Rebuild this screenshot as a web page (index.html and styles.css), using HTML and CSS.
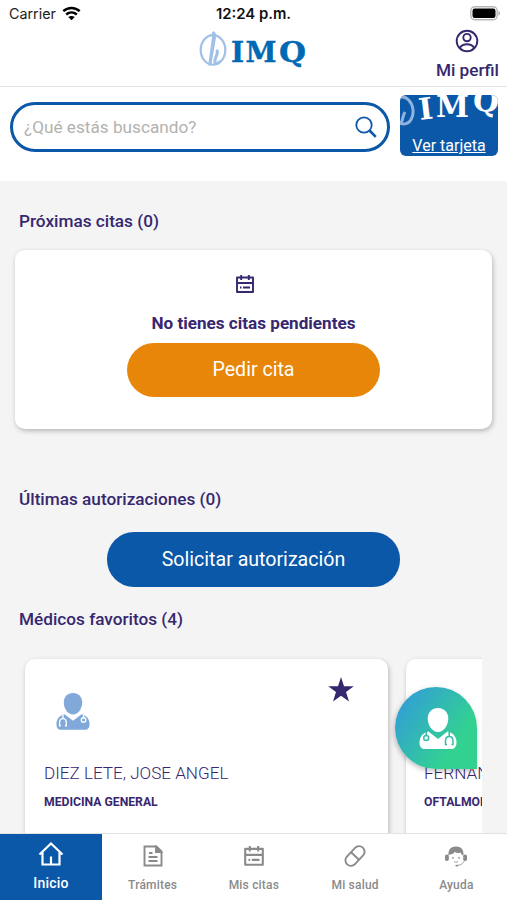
FILE: index.html
```html
<!DOCTYPE html>
<html lang="es">
<head>
    <meta charset="UTF-8">
    <meta name="viewport" content="width=device-width, initial-scale=1.0">
    <title>IMQ</title>
    <link rel="stylesheet" href="styles.css">
</head>
<body>
    <!-- Iconos compartidos -->
    <svg class="sprite" width="0" height="0">
        <symbol id="calendar" viewBox="0 0 20 20">
            <path d="M2 3.500h16v14.500H2zM2 9h16M6.200 1v5M13.800 1v5M5 13.500h1.500M8 13.500h7" fill="none" stroke="currentColor" stroke-width="1.900" stroke-linejoin="round"/>
        </symbol>
        <symbol id="drop" viewBox="0 0 30 40">
            <ellipse cx="15" cy="21.500" rx="13.300" ry="16" fill="none" stroke="currentColor" stroke-width="2.400"/>
            <path d="M15.500 1c2 1.200 3.300 3.500 3 6L13.500 36c-.6 3.500-4 3.500-3.500.5L14 7c-1-2-.5-4.500 1.500-6z" fill="currentColor"/>
            <path d="M19.500 22.500c1.500 3-3 8-2.500 12.500.5 2 3.500 1.500 5-.5" fill="none" stroke="currentColor" stroke-width="3.200" stroke-linecap="round"/>
        </symbol>
        <symbol id="doctor" viewBox="0 0 38 42">
            <path d="M19 1c6 0 10.300 4.200 10.300 10.500C29.300 18.500 24.500 25 19 25S8.700 18.500 8.700 11.500C8.700 5.200 13 1 19 1z" fill="currentColor"/>
            <path d="M9.500 24.500 19 32l9.500-7.500c6 1.500 9 5.500 9 11 0 4-1.800 6.500-5 6.500h-27c-3.200 0-5-2.500-5-6.500 0-5.500 3-9.500 9-11z" fill="currentColor"/>
            <path d="M7.800 25v4M5.500 37.500H4V34c0-6 7.500-6 7.500 0v3.500H10M30.800 25v3.500" fill="none" stroke="var(--scope)" stroke-width="1.500"/>
            <circle cx="30.800" cy="31" r="2.500" fill="none" stroke="var(--scope)" stroke-width="1.500"/>
        </symbol>
    </svg>

    <header class="header">
        <div class="status-bar">
            <div class="carrier">
                <span>Carrier</span>
                <svg width="19" height="15" viewBox="0 0 19 15" fill="none" stroke="#000" stroke-width="2.500">
                    <path d="M1.300 5.200C6 .9 13 .9 17.700 5.200M4.200 8.500c3.200-2.800 7.400-2.800 10.600 0"/>
                    <path d="M9.500 14.300 6.300 11c1.800-1.500 4.600-1.500 6.400 0z" fill="#000" stroke="none"/>
                </svg>
            </div>
            <span class="time">12:24 p.m.</span>
            <svg class="battery" width="31" height="15" viewBox="0 0 31 15">
                <rect x=".8" y=".8" width="26.400" height="13" rx="4" fill="#fff" stroke="#b5b5b5" stroke-width="1.400"/>
                <rect x="2.500" y="2.600" width="23" height="9.400" rx="2.200"/>
                <path d="M28.500 5c2 .8 2 3.800 0 4.600z" fill="#aaa"/>
            </svg>
        </div>
        <div class="top-bar">
            <svg class="logo" width="110" height="38" viewBox="0 0 110 38">
                <use href="#drop" x="0" y="0" width="28" height="37" class="logo-drop"/>
                <g class="logo-text">
                    <text x="32" y="32">I</text>
                    <text x="46.500" y="32">M</text>
                    <text x="80" y="32" textLength="27" lengthAdjust="spacingAndGlyphs">Q</text>
                </g>
            </svg>
            <a class="profile">
                <svg width="24" height="24" viewBox="0 0 24 24" fill="none" stroke="currentColor" stroke-width="1.900">
                    <circle cx="12" cy="12" r="10.300"/>
                    <circle cx="12" cy="8.600" r="3.700"/>
                    <path d="M4.800 19c3-5 11.400-5 14.400 0"/>
                </svg>
                <span>Mi perfil</span>
            </a>
        </div>
    </header>

    <section class="search-row">
        <div class="search">
            <span>¿Qué estás buscando?</span>
            <svg width="22" height="22" viewBox="0 0 22 22" fill="none" stroke="currentColor">
                <circle cx="9" cy="9" r="7.700" stroke-width="1.800"/>
                <path d="m14.500 14.500 6.300 6.300" stroke-width="2.600"/>
            </svg>
        </div>
        <a class="card-link">
            <svg class="card-logo" width="98" height="34" viewBox="0 0 98 34">
                <ellipse class="card-ring" cx="3" cy="15.500" rx="10" ry="13.500" transform="rotate(-8 3 15.500)"/>
                <path class="card-ring" d="M0 29c3-2 2-7 5-12"/>
                <g class="card-letters">
                    <text x="20" y="25" transform="rotate(-7 20 25)">I</text>
                    <text x="36" y="21.500" textLength="33" lengthAdjust="spacingAndGlyphs">M</text>
                    <text x="72" y="15" transform="rotate(6 72 15)">Q</text>
                </g>
            </svg>
            <span>Ver tarjeta</span>
        </a>
    </section>

    <main class="content">
        <h2>Próximas citas (0)</h2>
        <div class="appointments">
            <svg class="cal" width="20" height="20"><use href="#calendar"/></svg>
            <p>No tienes citas pendientes</p>
            <button class="btn btn-orange">Pedir cita</button>
        </div>

        <h2 class="title-auth">Últimas autorizaciones (0)</h2>
        <button class="btn btn-blue">Solicitar autorización</button>

        <h2 class="title-fav">Médicos favoritos (4)</h2>
        <div class="doctors">
            <article class="doctor">
                <svg class="doctor-icon" width="34" height="38"><use href="#doctor"/></svg>
                <svg class="star" width="26" height="25" viewBox="0 0 26 25"><path d="m13 0 3 9.300h9.800L18 15.100l3 9.400-8-5.800-8 5.800 3-9.400L.2 9.300H10z" fill="currentColor"/></svg>
                <h3>DIEZ LETE, JOSE ANGEL</h3>
                <p>MEDICINA GENERAL</p>
            </article>
            <article class="doctor">
                <svg class="doctor-icon" width="34" height="38"><use href="#doctor"/></svg>
                <h3>FERNAN</h3>
                <p>OFTALMOL</p>
            </article>
        </div>
    </main>

    <a class="chat">
        <svg width="38" height="42"><use href="#doctor"/></svg>
    </a>

    <nav class="tabs">
        <a class="tab active">
            <svg width="26" height="26" viewBox="0 0 26 26" fill="none" stroke="currentColor" stroke-width="2.200">
                <path d="M1.500 13.500 13 2.500l11.500 11M4.500 11v12.500h17V11M13 23.500v-8"/>
            </svg>
            <span>Inicio</span>
        </a>
        <a class="tab">
            <svg width="22" height="22" viewBox="0 0 22 22" fill="none" stroke="currentColor" stroke-width="1.900">
                <path d="M2.500 1.500h12l5 5v14h-17zM7 8h3.500M6.500 12h9M6.500 16h9"/>
                <path d="M14 2v5h5z" fill="currentColor"/>
            </svg>
            <span>Trámites</span>
        </a>
        <a class="tab">
            <svg width="24" height="24"><use href="#calendar"/></svg>
            <span>Mis citas</span>
        </a>
        <a class="tab">
            <svg width="22" height="22" viewBox="0 0 22 22" fill="none" stroke="currentColor" stroke-width="1.900">
                <g transform="rotate(-47 11 11)">
                    <rect x="-.5" y="5.500" width="23" height="11" rx="5.500"/>
                    <path d="M11 5.500v11"/>
                </g>
            </svg>
            <span>Mi salud</span>
        </a>
        <a class="tab">
            <svg width="24" height="22" viewBox="0 0 24 22" fill="currentColor">
                <path d="M4.500 10.500C4 4.500 7 1.500 12 1.500s8 3 7.500 9l-1.500-.5-1.500-2.500c-2 1-4.300.5-5.800-.8C9.800 8.500 8 9.500 6 9.500z"/>
                <rect x="1" y="9.500" width="3.800" height="6.500" rx="1.800"/>
                <rect x="19.200" y="9.500" width="3.800" height="6.500" rx="1.800"/>
                <circle cx="9" cy="12.800" r=".9"/>
                <circle cx="15" cy="12.800" r=".9"/>
                <path d="M10 16.500c1.300 1 2.700 1 4 0M20.500 15.500c-1 2.800-4 4.800-7.500 5" fill="none" stroke="currentColor" stroke-width=".8"/>
                <ellipse cx="12.800" cy="20.600" rx="1.500" ry=".9"/>
            </svg>
            <span>Ayuda</span>
        </a>
    </nav>
</body>
</html>
```
FILE: styles.css
```css
* { box-sizing: border-box; }
body {
    font-family: Roboto, sans-serif;
    margin: 0;
    height: 900px;
    display: flex;
    flex-direction: column;
    overflow: hidden;
    background-color: #fff;
    color: #36276f;
}
svg { display: block; flex: none; }
.sprite { position: absolute; }
h2, h3, p { margin: 0; }

/* Header */
.header { height: 87px; border-bottom: 1px solid #e4e4e4; }
.status-bar {
    display: grid;
    grid-template-columns: 1fr auto 1fr;
    align-items: center;
    height: 27px;
    padding: 0 6px 0 9px;
    font-family: Inter, sans-serif;
    font-size: 14.3px;
    color: #222;
}
.carrier { display: flex; align-items: center; gap: 6px; }
.time { margin-right: 3px; font-size: 14.9px; font-weight: 600; color: #111; }
.battery { justify-self: end; }
.top-bar {
    display: grid;
    grid-template-columns: 1fr auto 1fr;
    padding: 3px 8px 0;
}
.logo { grid-column: 2; }
.logo-drop { color: #a0c0e7; }
.logo-text { font: bold 28px "DejaVu Serif", serif; fill: #0069b4; stroke: #0069b4; stroke-width: 0.4px; }
.profile {
    justify-self: end;
    display: flex;
    flex-direction: column;
    align-items: center;
    font-size: 17.2px;
    font-weight: 500;
    line-height: 20px;
}
.profile svg { margin-bottom: 7px; margin-top: -1px; }

/* Search */
.search-row {
    display: flex;
    gap: 10px;
    height: 94px;
    padding: 8px 9px 0 10px;
}
.search {
    flex: 1;
    display: flex;
    align-items: center;
    justify-content: space-between;
    height: 50px;
    margin-top: 7px;
    padding: 0 10px 0 11px;
    border: 3px solid #0b58a8;
    border-radius: 25px;
    font-size: 17.2px;
    color: #0b58a8;
}
.search span { color: #b2b2ae; }
.card-link {
    width: 98px;
    height: 61px;
    border-radius: 6px;
    background-color: #0b58a8;
    overflow: hidden;
    text-align: center;
    font-size: 16px;
    color: #fff;
    text-decoration: underline;
}
.card-link span { display: block; margin-top: 7px; line-height: 20px; }
.card-letters { font: bold 30px "DejaVu Serif", serif; fill: #fff; }
.card-ring { fill: none; stroke: #8fb3dc; stroke-width: 3px; }

/* Content */
.content {
    flex: 1;
    min-height: 0;
    overflow: hidden;
    padding: 30px 15px 0;
    background-color: #f4f4f4;
}
h2 { padding-left: 4px; font-size: 17.2px; font-weight: 500; line-height: 20px; }
.appointments {
    display: flex;
    flex-direction: column;
    align-items: center;
    height: 179px;
    margin-top: 19px;
    padding-top: 24px;
    border-radius: 10px;
    background-color: #fff;
    box-shadow: 1px 2px 5px rgba(0,0,0,0.25);
}
.cal { margin-right: 18px; }
.appointments p { margin: 19px 0 10px; font-size: 17.1px; font-weight: 700; line-height: 20px; }
.btn {
    display: block;
    height: 54px;
    border: none;
    border-radius: 27px;
    font: 19.6px Roboto, sans-serif;
    color: #fff;
}
.btn-orange { width: 253px; padding-bottom: 3px; background-color: #e78609; }
.btn-blue { width: 293px; height: 55px; margin: 23px auto 0; background-color: #0b58a8; }
.title-auth { margin-top: 60px; }
.title-fav { margin-top: 22px; }

.doctors {
    display: flex;
    gap: 18px;
    margin: 20px 10px 0 0;
    padding: 10px 0 0 10px;
    overflow: hidden;
}
.doctor {
    flex: none;
    position: relative;
    width: 363px;
    height: 230px;
    padding: 33px 20px 0 19px;
    border-radius: 10px;
    background-color: #fff;
    box-shadow: 1px 2px 5px rgba(0,0,0,0.25);
}
.doctor + .doctor { padding-left: 18px; }
.doctor-icon { --scope: #fff; margin-left: 12px; color: #80a9da; }
.star { position: absolute; top: 18px; right: 34px; }
.doctor h3 { margin-top: 33px; font-size: 17.1px; font-weight: 300; line-height: 20px; }
.doctor p { margin-top: 11px; font-size: 12.2px; font-weight: 700; line-height: 16px; }

/* Floating button */
.chat {
    --scope: #35bda9;
    position: absolute;
    left: 395px;
    top: 687px;
    width: 82px;
    height: 82px;
    display: flex;
    align-items: center;
    justify-content: center;
    border-radius: 50% 50% 0 50%;
    background: linear-gradient(125deg, #32a0d4 12%, #32d192 72%);
    box-shadow: -1px 2px 5px rgba(0,0,0,0.25);
    color: #fff;
}
.chat svg { margin-left: 4px; transform: scaleX(-1); }

/* Tabs */
.tabs {
    display: grid;
    grid-template-columns: 102px repeat(4, 1fr);
    height: 67px;
    border-top: 1px solid #e2e2e2;
    background-color: #fff;
}
.tab {
    display: flex;
    flex-direction: column;
    align-items: center;
    justify-content: flex-end;
    padding-bottom: 7px;
    font-size: 12px;
    font-weight: 500;
    letter-spacing: 0.2px;
    color: #8a8a8a;
}
.tab svg { height: 22px; }
.tab span { margin-top: 10px; line-height: 16px; }
.tab.active { padding-bottom: 9px; background-color: #0b58a8; color: #fff; font-size: 14px; }
.tab.active svg { height: 26px; }
.tab.active span { margin-top: 8px; }
```
